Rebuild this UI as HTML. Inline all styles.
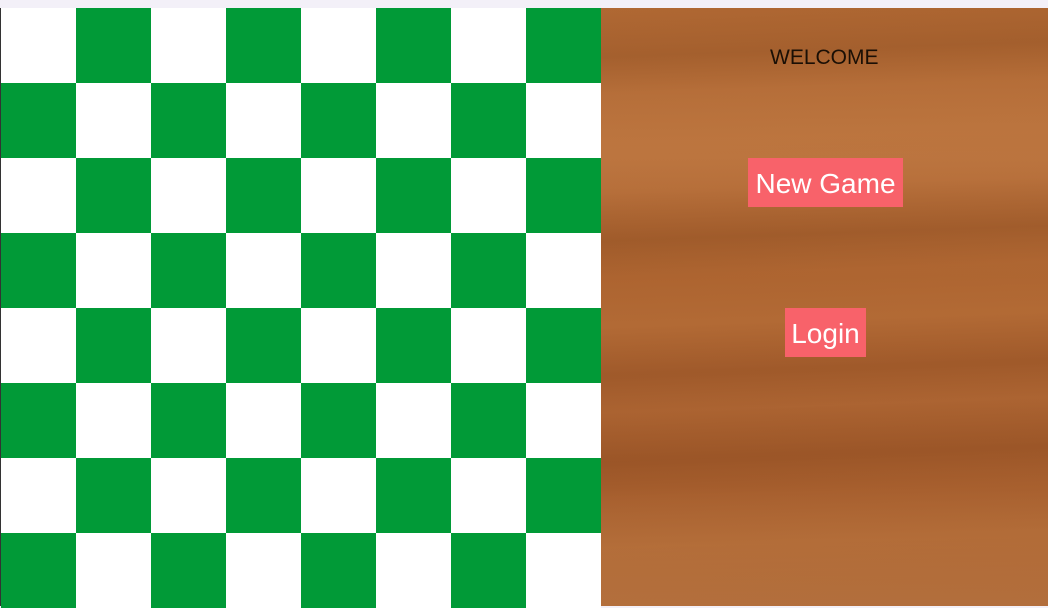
<!DOCTYPE html>
<html><head><style>
html,body{margin:0;padding:0;width:1048px;height:606px;overflow:hidden;background:#f3f0f8;font-family:"Liberation Sans",sans-serif}
#left{position:absolute;left:0;top:8px;width:1px;height:598px;background:#333}
#board{position:absolute;left:1px;top:8px;width:600px;height:600px;
background:conic-gradient(#019a37 25%,#fff 0 50%,#019a37 0 75%,#fff 0);
background-size:150px 150px}
#wood{position:absolute;left:601px;top:8px;width:447px;height:598px;
background:
linear-gradient(178deg,transparent 0,rgba(120,60,20,.25) 8%,transparent 14%,rgba(200,130,70,.2) 22%,transparent 30%,rgba(120,60,20,.3) 38%,transparent 44%,rgba(200,130,70,.2) 52%,rgba(130,65,25,.3) 60%,transparent 66%,rgba(130,65,25,.35) 74%,transparent 80%,rgba(200,130,70,.25) 88%,transparent 100%),
linear-gradient(180deg,#b06833 0%,#ba733e 25%,#ad6430 45%,#ac6432 65%,#a75f2e 80%,#b26e3c 100%)}
.t{position:absolute;color:#1a0f05;font-size:21px;left:770px;top:46px}
.b{position:absolute;background:#f8626a;color:#fff;font-size:28px;text-align:center}
</style></head><body>
<div id="left"></div>
<div id="board"></div>
<div id="wood"></div>
<div class="t">WELCOME</div>
<div class="b" style="left:748px;top:158px;width:155px;height:49px;line-height:52px">New Game</div>
<div class="b" style="left:785px;top:308px;width:81px;height:49px;line-height:52px">Login</div>
</body></html>
